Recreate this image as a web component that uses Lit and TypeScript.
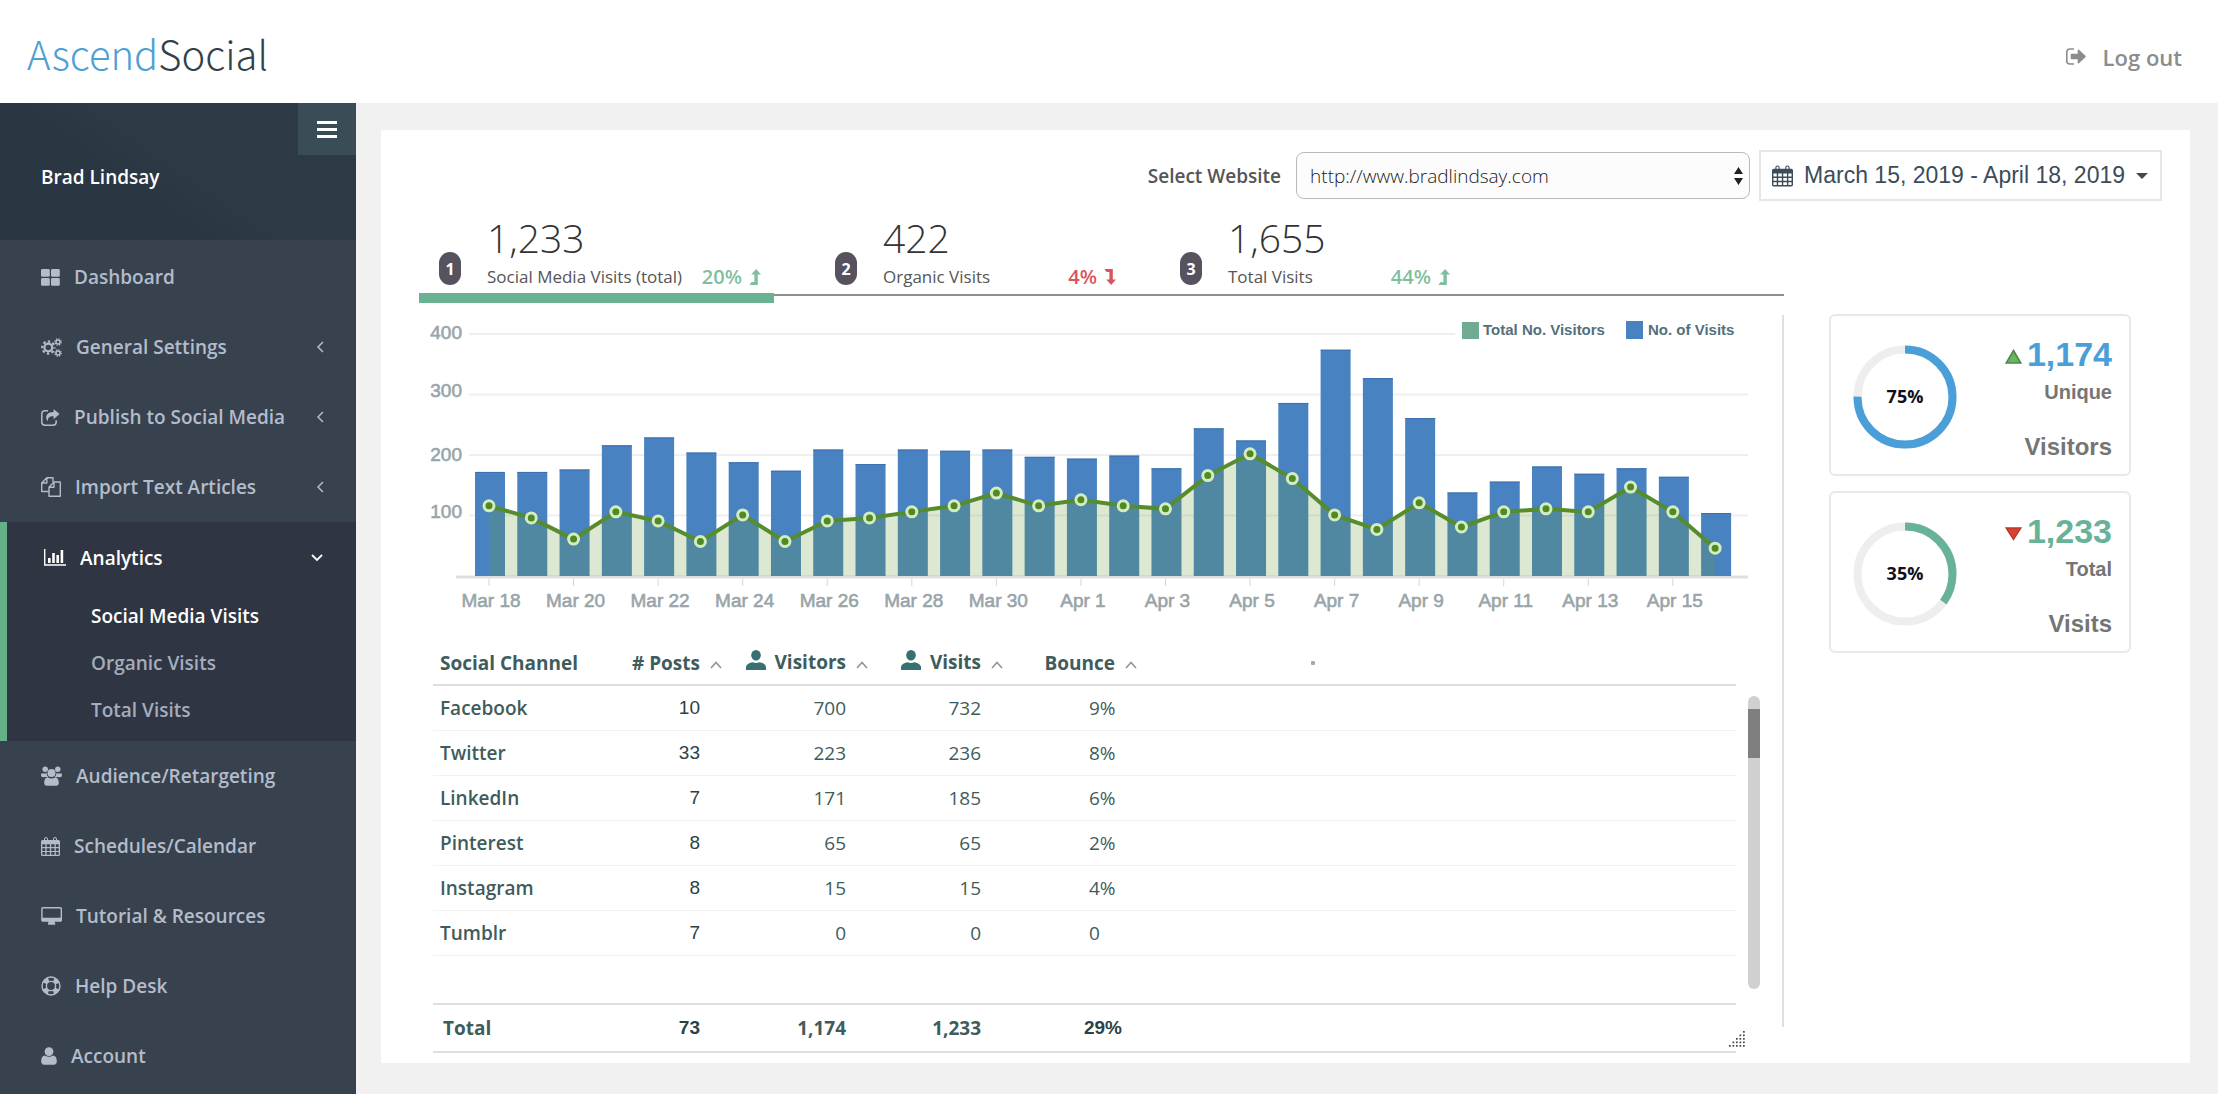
import { LitElement, html, svg, css } from "lit";
import { customElement, property, state } from "lit/decorators.js";
import { classMap } from "lit/directives/class-map.js";

type Glyph = { w: number; h: number; art: unknown };

const calendarArt = svg`
  <path fill-rule="evenodd" d="M1.5 3h16q1.500 0 1.500 1.500v13q0 1.500-1.500 1.500h-16q-1.500 0-1.500-1.500v-13q0-1.500 1.500-1.500zM1.300 7.200v2.800h3v-2.800zm4.300 0v2.800h3.300v-2.800zm4.600 0v2.800h3.300v-2.800zm4.600 0v2.800h2.900v-2.800zM1.300 11.200v2.700h3v-2.700zm4.300 0v2.700h3.300v-2.700zm4.600 0v2.700h3.300v-2.700zm4.600 0v2.700h2.900v-2.700zM1.300 15.100v2.600h3v-2.600zm4.300 0v2.600h3.300v-2.600zm4.600 0v2.600h3.300v-2.600zm4.600 0v2.600h2.900v-2.600z"/>
  <rect x="3.500" y="0.500" width="3" height="5" rx="1.500" fill="none" stroke="currentColor"/>
  <rect x="12.500" y="0.500" width="3" height="5" rx="1.500" fill="none" stroke="currentColor"/>`;

const glyphs: Record<string, Glyph> = {
  grid: {
    w: 19, h: 17,
    art: svg`<rect width="8.800" height="7.800" rx="1.400"/><rect x="10" width="8.800" height="7.800" rx="1.400"/>
      <rect y="9" width="8.800" height="7.800" rx="1.400"/><rect x="10" y="9" width="8.800" height="7.800" rx="1.400"/>`,
  },
  cogs: {
    w: 21, h: 19,
    art: svg`<g fill="none" stroke="currentColor">
      <circle cx="7.300" cy="9.500" r="3.900" stroke-width="2.200"/>
      <circle cx="7.300" cy="9.500" r="6.100" stroke-width="2.200" stroke-dasharray="2.400 2.390" stroke-dashoffset="1.200"/>
      <circle cx="17" cy="4" r="2" stroke-width="1.500"/>
      <circle cx="17" cy="4" r="3.200" stroke-width="1.300" stroke-dasharray="1.300 1.213"/>
      <circle cx="17" cy="15" r="2" stroke-width="1.500"/>
      <circle cx="17" cy="15" r="3.200" stroke-width="1.300" stroke-dasharray="1.300 1.213"/></g>`,
  },
  share: {
    w: 19, h: 17,
    art: svg`<path fill="none" stroke="currentColor" stroke-width="1.500" d="M7 1.800H4Q.8 1.800.8 5v8q0 3.200 3.200 3.200h8q3.200 0 3.200-3.200v-1.800"/>
      <path d="M12.600 0 18.600 5.100 12.600 10.200V7.300C8.800 7.200 6.600 8 6.900 12.600 3.200 7.500 5.800 3 12.600 2.900z"/>`,
  },
  files: {
    w: 20, h: 20,
    art: svg`<g fill="none" stroke="currentColor" stroke-width="1.400" stroke-linejoin="round">
      <path d="M8 14.500H.7V6L5.800.7h6.200v4.300M5.800.7V6H.7"/>
      <path d="M8 10.200 13 5h6.300v14.300H8zM13 5v5.200H8"/></g>`,
  },
  chart: {
    w: 22, h: 17,
    art: svg`<path d="M0 0h1.400v15.300H22v1.400H0zM4 9h2.600v5H4zm4.200-5h2.600v10H8.200zm4.200 2H15v8h-2.600zm4.200-5h2.600v13h-2.600z"/>`,
  },
  users: {
    w: 21, h: 20,
    art: svg`<circle cx="4.200" cy="3.200" r="2.700"/><circle cx="16.800" cy="3.200" r="2.700"/><circle cx="10.500" cy="7" r="4"/>
      <path d="M1 7.200c1.500.6 3 .5 4.600-.2.100 1.700.6 2.800 1.600 3.900H4.400L2 11.300Q0 11 0 9.200c0-1 .3-2 1-2zM20 7.200c-1.500.6-3 .5-4.600-.2-.1 1.700-.6 2.800-1.600 3.900h2.800l2.400.4q2-.3 2-2.100c0-1-.3-2-1-2z"/>
      <path d="M6.700 11.300c2.500 1.600 5.100 1.600 7.600 0 2.700.3 3.500 3 3.500 5.700q0 2.800-2.800 2.800H6q-2.800 0-2.800-2.800c0-2.700.8-5.400 3.500-5.700z"/>`,
  },
  calendar: { w: 19, h: 19, art: calendarArt },
  desktop: {
    w: 21, h: 18,
    art: svg`<path fill-rule="evenodd" d="M1.800 0h17.600Q21 0 21 1.600v11.600q0 1.600-1.600 1.600h-5.800l.8 2.200q0 .8-.7.800H7.500q-.7 0-.7-.8l.8-2.200H1.800Q.2 14.800.2 13.200V1.600Q.2 0 1.800 0zM1.600 1.400v9.400h18V1.400z"/>`,
  },
  ring: {
    w: 20, h: 20,
    art: svg`<g fill="none" stroke="currentColor"><circle cx="10" cy="10" r="9" stroke-width="1.400"/>
      <circle cx="10" cy="10" r="4.600" stroke-width="1.400"/>
      <circle cx="10" cy="10" r="6.800" stroke-width="4.200" stroke-dasharray="5.340 5.340" stroke-dashoffset="-2.670"/></g>`,
  },
  user: {
    w: 16, h: 18,
    art: svg`<circle cx="8" cy="4.600" r="4.400"/><path d="M4 8.400c2.700 1.900 5.300 1.900 8 0 3.100.3 3.800 3.200 3.800 6.200 0 2-1.200 3.200-2.800 3.200H3c-1.600 0-2.800-1.200-2.800-3.200 0-3 .7-5.900 3.800-6.200z"/>`,
  },
  exit: {
    w: 20, h: 17,
    art: svg`<path fill="none" stroke="currentColor" stroke-width="1.600" d="M8 1H4Q.8 1 .8 4v9q0 3 3.200 3h4"/>
      <path d="M5.500 5.700h6.200V2.200q.2-1.200 1.300-.4l6.400 6q.8.700 0 1.400l-6.400 6q-1.100.8-1.300-.4v-3.500H5.500q-.8 0-.8-.8V6.500q0-.8.8-.8z"/>`,
  },
  person: {
    w: 20, h: 20,
    art: svg`<ellipse cx="10" cy="5.200" rx="4.800" ry="5.200"/><path d="M0 20v-2.600C0 14 4 12.600 6.600 12.200q3.400 1.600 6.800 0C16 12.600 20 14 20 17.400V20z"/>`,
  },
  up: { w: 12, h: 16, art: svg`<path d="M8.800 5.600V16H.4l2.200-2.900h2.800V5.600H2.200L7.100 0 12 5.600z"/>` },
  down: { w: 12, h: 16, art: svg`<path d="M8.800 10.400V0H.4l2.200 2.900h2.800v7.500H2.200L7.100 16l4.900-5.600z"/>` },
  left: { w: 9, h: 12, art: svg`<path fill="none" stroke="currentColor" stroke-width="1.500" d="M7 1 2 6l5 5"/>` },
  open: { w: 12, h: 9, art: svg`<path fill="none" stroke="currentColor" stroke-width="1.800" d="m1 2 5 5 5-5"/>` },
  sort: { w: 12, h: 8, art: svg`<path fill="none" stroke="currentColor" stroke-width="1.600" d="m1 7 5-5.500L11 7"/>` },
};

const icon = (name: string, cls = "") => {
  const g = glyphs[name];
  return html`<svg class=${`icon ${cls}`} width=${g.w} height=${g.h} viewBox="0 0 ${g.w} ${g.h}" fill="currentColor" aria-hidden="true">${g.art}</svg>`;
};

const iconStyles = css`
  .icon { display: block; flex: none; overflow: visible; }
`;

@customElement("side-nav")
class SideNav extends LitElement {
  @state() private page = "Social Media Visits";

  static styles = [iconStyles, css`
    :host { display: block; background: #37424e; font-family: "Open Sans", sans-serif; font-weight: 600; font-size: 19px; color: #b4bccb; }
    .profile { display: flex; justify-content: space-between; height: 137px; background: linear-gradient(215deg, #2d3a46 50%, #2a3641 62%); color: #fff; }
    .name { padding: 60px 0 0 41px; line-height: 28px; font-size: 19px; margin: 0; font-weight: 600; }
    .toggle { display: flex; flex-direction: column; align-items: center; justify-content: center; gap: 4px; width: 58px; height: 52px; border: 0; padding: 0; background: #3a4c56; }
    .bar { width: 20px; height: 3px; background: #fff; }
    ul { list-style: none; margin: 0; padding: 0; }
    .items { padding-top: 2px; }
    a { color: inherit; text-decoration: none; }
    .link { display: flex; align-items: center; gap: 14px; height: 70px; padding: 0 31px 0 41px; }
    .label { flex: 1; white-space: nowrap; }
    .group { background: #2f3542; border-left: 7px solid #64b189; padding-bottom: 7px; }
    .group .link { height: 71px; padding: 0 33px 0 37px; color: #fff; }
    .sub { display: block; line-height: 47px; padding-left: 84px; color: #a5adbc; }
    .current { color: #fff; }
  `];

  private item(glyph: string, label: string, more = false) {
    return html`<li><a class="link" href="#">${icon(glyph)}<span class="label">${label}</span>${more ? icon("left") : ""}</a></li>`;
  }

  render() {
    return html`
      <div class="profile">
        <p class="name">Brad Lindsay</p>
        <button class="toggle" aria-label="Toggle menu"><span class="bar"></span><span class="bar"></span><span class="bar"></span></button>
      </div>
      <nav>
        <ul class="items">
          ${this.item("grid", "Dashboard")}
          ${this.item("cogs", "General Settings", true)}
          ${this.item("share", "Publish to Social Media", true)}
          ${this.item("files", "Import Text Articles", true)}
          <li class="group">
            <a class="link" href="#">${icon("chart")}<span class="label">Analytics</span>${icon("open")}</a>
            <ul>
              ${["Social Media Visits", "Organic Visits", "Total Visits"].map((t) => html`
                <li><a href="#" class=${classMap({ sub: true, current: t === this.page })} @click=${() => (this.page = t)}>${t}</a></li>`)}
            </ul>
          </li>
          ${this.item("users", "Audience/Retargeting")}
          ${this.item("calendar", "Schedules/Calendar")}
          ${this.item("desktop", "Tutorial & Resources")}
          ${this.item("ring", "Help Desk")}
          ${this.item("user", "Account")}
        </ul>
      </nav>`;
  }
}

@customElement("visits-chart")
class VisitsChart extends LitElement {
  private visits = [172, 172, 176, 216, 229, 204, 188, 174, 209, 185, 209, 207, 209, 197, 194, 199, 178, 244, 224, 286, 374, 327, 261, 138, 156, 181, 169, 178, 164, 104];
  private visitors = [116, 96, 61, 106, 91, 57, 101, 57, 91, 96, 106, 116, 137, 116, 126, 116, 111, 166, 202, 161, 101, 77, 121, 81, 106, 111, 106, 147, 106, 46];
  private days = ["Mar 18", "Mar 20", "Mar 22", "Mar 24", "Mar 26", "Mar 28", "Mar 30", "Apr 1", "Apr 3", "Apr 5", "Apr 7", "Apr 9", "Apr 11", "Apr 13", "Apr 15"];

  static styles = css`
    :host { display: block; }
    svg { display: block; width: 100%; height: auto; font-family: "Liberation Sans", Arial, sans-serif; }
    .rule { stroke: #efefef; stroke-width: 2; }
    .axis { stroke: #dfdfdf; stroke-width: 3; }
    .tick { stroke: #ccd6eb; stroke-width: 1; }
    .scale { font-size: 19px; fill: #99a5a9; stroke: #99a5a9; stroke-width: 0.6; }
    .legend { font-size: 15px; font-weight: 700; fill: #54707c; }
    .bar { fill: #4882c0; }
    .cap { fill: #3c6fae; }
    .area { fill: rgba(104, 155, 55, 0.23); }
    .line { fill: none; stroke: #558c2c; stroke-width: 4; }
    .dot { fill: #4f8a22; stroke: #d3ecc0; stroke-width: 3; }
  `;

  render() {
    const x = (i: number) => 70 + i * 42.28;
    const y = (v: number) => 261 - v * 0.605;
    const points = this.visitors.map((v, i) => `${x(i)},${y(v)}`).join(" ");
    return html`
      <svg viewBox="0 0 1341 305" role="img" aria-label="Visits and visitors per day">
        ${[[400, 24], [300, 82], [200, 146], [100, 203]].map(([v, ty]) => svg`
          <text class="scale" x="43" y=${ty} text-anchor="end">${v}</text>
          <line class="rule" x1="50" x2=${v === 400 ? 1036 : 1329} y1=${y(v)} y2=${y(v)}></line>`)}
        <line class="axis" x1="37" x2="1329" y1="262" y2="262"></line>
        ${this.visits.map((v, i) => svg`
          <rect class="bar" x=${x(i) - 14} y=${y(v)} width="30" height=${261 - y(v)}></rect>
          <rect class="cap" x=${x(i) - 14} y=${y(v)} width="30" height="1"></rect>`)}
        <polygon class="area" points="${x(0)},261 ${points} ${x(29)},261"></polygon>
        <polyline class="line" points=${points}></polyline>
        ${this.visitors.map((v, i) => svg`<circle class="dot" cx=${x(i)} cy=${y(v)} r="5"></circle>`)}
        ${this.days.map((d, i) => svg`
          <line class="tick" x1=${x(i * 2)} x2=${x(i * 2)} y1="264" y2="271"></line>
          <text class="scale" x=${x(i * 2) + 2} y="292" text-anchor="middle">${d}</text>`)}
        <rect x="1043" y="7" width="17" height="17" fill="#6fab90"></rect>
        <text class="legend" x="1064" y="20">Total No. Visitors</text>
        <rect x="1207" y="6" width="17" height="18" fill="#4882c0"></rect>
        <text class="legend" x="1229" y="20">No. of Visits</text>
      </svg>`;
  }
}

@customElement("metric-card")
class MetricCard extends LitElement {
  @property({ type: Number }) share = 0;
  @property() color = "";
  @property() value = "";
  @property() first = "";
  @property() second = "";
  @property({ type: Boolean }) rising = false;

  static styles = css`
    :host { display: flex; align-items: center; justify-content: space-between; box-sizing: border-box; height: 162px; padding: 4px 17px 0 22px; border: 2px solid #e9e9e9; border-radius: 6px; background: #fff; font-family: "Liberation Sans", Arial, sans-serif; font-weight: 700; color: #757575; }
    .ring { display: block; width: 104px; height: 104px; }
    .pct { font: 700 18px "Open Sans", sans-serif; fill: #101020; }
    .text { text-align: right; }
    .value { display: flex; align-items: center; justify-content: flex-end; gap: 5px; font-size: 34px; line-height: 40px; }
    .first { font-size: 20px; line-height: 24px; margin-top: 6px; }
    .second { font-size: 24px; line-height: 28px; margin-top: 29px; }
    .mark { display: block; margin-top: 6px; }
  `;

  render() {
    const turn = 2 * Math.PI * 47.5;
    return html`
      <svg class="ring" viewBox="0 0 104 104" role="img" aria-label="${this.share}%">
        <circle cx="52" cy="52" r="47.500" fill="none" stroke="#eeeeee" stroke-width="8"></circle>
        <circle cx="52" cy="52" r="47.500" fill="none" stroke=${this.color} stroke-width="8" transform="rotate(-90 52 52)" stroke-dasharray="${(turn * this.share) / 100} ${turn}"></circle>
        <text class="pct" x="52" y="58" text-anchor="middle">${this.share}%</text>
      </svg>
      <div class="text">
        <div class="value">
          <svg class="mark" width="17" height="15" viewBox="0 0 17 15" aria-hidden="true">
            ${this.rising
              ? svg`<path d="M8.500 1.500 15.800 14H1.200z" fill="#6db365" stroke="#4b8a44" stroke-width="1.600"/>`
              : svg`<path d="M1.200 2h14.600L8.500 13.500z" fill="#d8402f" stroke="#b93a2c" stroke-width="1.400"/>`}
          </svg>
          <span style="color:${this.color}">${this.value}</span>
        </div>
        <div class="first">${this.first}</div>
        <div class="second">${this.second}</div>
      </div>`;
  }
}

@customElement("channel-table")
class ChannelTable extends LitElement {
  private rows = [
    ["Facebook", "10", "700", "732", "9%"],
    ["Twitter", "33", "223", "236", "8%"],
    ["LinkedIn", "7", "171", "185", "6%"],
    ["Pinterest", "8", "65", "65", "2%"],
    ["Instagram", "8", "15", "15", "4%"],
    ["Tumblr", "7", "0", "0", "0"],
  ];

  static styles = [iconStyles, css`
    :host { display: flex; gap: 12px; position: relative; font-family: "Open Sans", sans-serif; font-size: 19px; color: #3f5c5c; }
    table { flex: 1; width: 100%; table-layout: fixed; border-collapse: separate; border-spacing: 0; }
    .c-name { width: 189px; }
    .c-posts { width: 100px; }
    .c-visitors { width: 146px; }
    .c-visits { width: 135px; }
    .c-bounce { width: 134px; }
    th, td { box-sizing: border-box; padding: 0; height: 45px; border-bottom: 1px solid #f2f2f2; text-align: right; white-space: nowrap; }
    thead th, thead td { height: 66px; padding-top: 21px; border-bottom: 2px solid #dedede; font-weight: 700; }
    th:first-child { text-align: left; padding-left: 7px; font-weight: 600; }
    thead th:first-child, tfoot th:first-child { font-weight: 700; }
    td { padding-right: 22px; }
    td.posts { font: 19px "Liberation Sans", Arial, sans-serif; color: #2c4244; }
    tbody td.bounce { text-align: left; padding: 0 0 0 86px; }
    .gap td { height: 49px; border-bottom: 2px solid #e0e0e0; }
    tfoot th, tfoot td { height: 48px; border-bottom: 2px solid #e0e0e0; font-weight: 700; }
    tfoot th:first-child { padding-left: 10px; }
    tfoot td.strong { font: 700 19px "Liberation Sans", Arial, sans-serif; color: #2c4244; }
    tfoot td.wide { padding-right: 15px; }
    .sorter { display: inline-flex; align-items: center; gap: 9px; border: 0; padding: 0; background: none; font: inherit; color: inherit; }
    .arrow { color: #8d9696; margin-top: 5px; margin-left: 1px; }
    .who { color: #377070; margin-bottom: 5px; }
    .speck { width: 4px; height: 4px; margin-left: 174px; background: #a8a8a8; border-radius: 1px; }
    .track { flex: none; width: 12px; height: 293px; margin-top: 76px; padding-top: 13px; box-sizing: border-box; border-radius: 6px; background: #d0d0d0; }
    .thumb { height: 49px; background: #7f7f7f; }
    .grip { position: absolute; right: 15px; bottom: 6px; }
  `];

  private head(label: string, person = false) {
    return html`<th scope="col"><button class="sorter">${person ? icon("person", "who") : ""}<span>${label}</span>${icon("sort", "arrow")}</button></th>`;
  }

  render() {
    const dots = [0, 1, 2, 3, 4].flatMap((c) => Array.from({ length: c + 1 }, (_, r) => [c * 3.5, 14 - r * 3.5]));
    return html`
      <table>
        <colgroup><col class="c-name"><col class="c-posts"><col class="c-visitors"><col class="c-visits"><col class="c-bounce"><col></colgroup>
        <thead>
          <tr>
            <th scope="col">Social Channel</th>
            ${this.head("# Posts")}${this.head("Visitors", true)}${this.head("Visits", true)}${this.head("Bounce")}
            <td><div class="speck"></div></td>
          </tr>
        </thead>
        <tbody>
          ${this.rows.map(([name, posts, visitors, visits, bounce]) => html`
            <tr><th scope="row">${name}</th><td class="posts">${posts}</td><td>${visitors}</td><td>${visits}</td><td class="bounce">${bounce}</td><td></td></tr>`)}
          <tr class="gap"><td colspan="6"></td></tr>
        </tbody>
        <tfoot>
          <tr><th scope="row">Total</th><td class="strong">73</td><td>1,174</td><td>1,233</td><td class="strong wide">29%</td><td></td></tr>
        </tfoot>
      </table>
      <div class="track"><div class="thumb"></div></div>
      <svg class="grip" width="16" height="16" viewBox="0 0 16 16" fill="#444" aria-hidden="true">
        ${dots.map(([dx, dy]) => svg`<rect x=${dx} y=${dy} width="1.700" height="1.700"></rect>`)}
      </svg>`;
  }
}

@customElement("app-root")
class AppRoot extends LitElement {
  private stats = [
    { value: "1,233", label: "Social Media Visits (total)", change: "20%", up: true },
    { value: "422", label: "Organic Visits", change: "4%", up: false },
    { value: "1,655", label: "Total Visits", change: "44%", up: true },
  ];

  static styles = [iconStyles, css`
    :host { display: flex; flex-direction: column; min-height: 100vh; background: #f1f1f1; font-family: "Open Sans", sans-serif; color: #444; }
    .top { display: flex; align-items: center; justify-content: space-between; height: 103px; padding: 0 36px 0 27px; background: #fff; box-sizing: border-box; }
    .logo { font: 300 40px "Noto Sans CJK JP", "Source Sans Pro", sans-serif; line-height: 60px; padding-top: 2px; color: #343f49; text-decoration: none; }
    .blue { color: #4f9fd4; }
    .logout { display: flex; align-items: center; gap: 17px; padding-top: 10px; color: #8c8c8c; font-weight: 600; font-size: 22px; text-decoration: none; }
    .frame { display: flex; flex: 1; }
    side-nav { flex: none; width: 356px; }
    main { flex: 1; min-width: 0; padding: 27px 28px 31px 25px; }
    .sheet { background: #fff; border-radius: 2px; padding-bottom: 10px; }
    .tools { display: flex; align-items: center; justify-content: flex-end; gap: 9px; padding: 20px 28px 0; }
    .field { font-weight: 600; font-size: 19px; color: #555; margin-right: 6px; }
    .pick { position: relative; width: 454px; }
    select { display: block; appearance: none; width: 100%; height: 47px; padding: 0 13px; border: 1px solid #b9b9b9; border-radius: 8px; background: #fcfcfc; font: 300 19px "Open Sans", sans-serif; color: #222; }
    .arrows { position: absolute; right: 7px; top: 15px; pointer-events: none; }
    .range { display: flex; align-items: center; gap: 11px; height: 51px; padding: 0 12px 0 11px; border: 2px solid #e6e6e6; background: #fff; font: 23px "Liberation Sans", Arial, sans-serif; color: #3c4c5a; }
    .content { display: flex; }
    .left { flex: 1; min-width: 0; padding-left: 38px; }
    .stats { display: grid; grid-template-columns: 396fr 345fr 604fr; height: 95px; padding-left: 20px; box-sizing: border-box; border-bottom: 2px solid #8d9291; position: relative; }
    .stats::after { content: ""; position: absolute; left: 0; bottom: -9px; width: 26%; height: 10px; background: #6ab292; }
    .stat { display: grid; grid-template-columns: 48px 1fr auto; grid-template-rows: 50px 28px; padding-top: 12px; }
    .stat:nth-child(1) { max-width: 322px; }
    .stat:nth-child(2) { max-width: 281px; }
    .stat:nth-child(3) { max-width: 270px; }
    .badge { grid-row: 1 / 3; align-self: end; display: flex; align-items: center; justify-content: center; width: 22px; height: 33px; margin-bottom: 6px; border-radius: 11px; background: #56535f; color: #fff; font-weight: 700; font-size: 16px; }
    .value { grid-column: 2 / 4; font-weight: 300; font-size: 39px; line-height: 50px; color: #333; }
    .label { font-size: 17px; line-height: 28px; color: #555; white-space: nowrap; }
    .change { display: flex; align-items: center; gap: 7px; font-weight: 600; font-size: 20px; line-height: 28px; color: #7fbf9f; }
    .drop { color: #d9545c; }
    .report { position: relative; margin-top: 19px; padding: 0 24px 0 0; }
    .report::after { content: ""; position: absolute; top: 0; right: 0; bottom: 26px; width: 2px; background: #e0e0e0; }
    channel-table { margin-left: 14px; }
    .right { flex: none; width: 302px; padding: 113px 59px 0 45px; display: flex; flex-direction: column; gap: 15px; }
  `];

  render() {
    return html`
      <header class="top">
        <a class="logo" href="#"><span class="blue">Ascend</span>Social</a>
        <a class="logout" href="#">${icon("exit")}<span>Log out</span></a>
      </header>
      <div class="frame">
        <side-nav></side-nav>
        <main>
          <section class="sheet">
            <div class="tools">
              <label class="field" for="site">Select Website</label>
              <div class="pick">
                <select id="site"><option>http://www.bradlindsay.com</option></select>
                <svg class="arrows" width="9" height="18" viewBox="0 0 9 18" fill="#222" aria-hidden="true"><path d="M4.500 0 9 7H0zM0 11h9l-4.500 7z"/></svg>
              </div>
              <button class="range">
                <svg class="icon" width="21" height="22" viewBox="0 0 19 19" fill="currentColor" aria-hidden="true">${calendarArt}</svg>
                <span>March 15, 2019 - April 18, 2019</span>
                <svg class="icon" width="12" height="6" viewBox="0 0 12 6" fill="currentColor" aria-hidden="true"><path d="M0 0h12L6 6z"/></svg>
              </button>
            </div>
            <div class="content">
              <div class="left">
                <div class="stats">
                  ${this.stats.map((s, i) => html`
                    <div class="stat">
                      <span class="badge">${i + 1}</span>
                      <span class="value">${s.value}</span>
                      <span class="label">${s.label}</span>
                      <span class=${classMap({ change: true, drop: !s.up })}>${s.change}${icon(s.up ? "up" : "down")}</span>
                    </div>`)}
                </div>
                <div class="report">
                  <visits-chart></visits-chart>
                  <channel-table></channel-table>
                </div>
              </div>
              <aside class="right">
                <metric-card .share=${75} color="#4a9fd8" value="1,174" first="Unique" second="Visitors" rising></metric-card>
                <metric-card .share=${35} color="#68b298" value="1,233" first="Total" second="Visits"></metric-card>
              </aside>
            </div>
          </section>
        </main>
      </div>`;
  }
}
